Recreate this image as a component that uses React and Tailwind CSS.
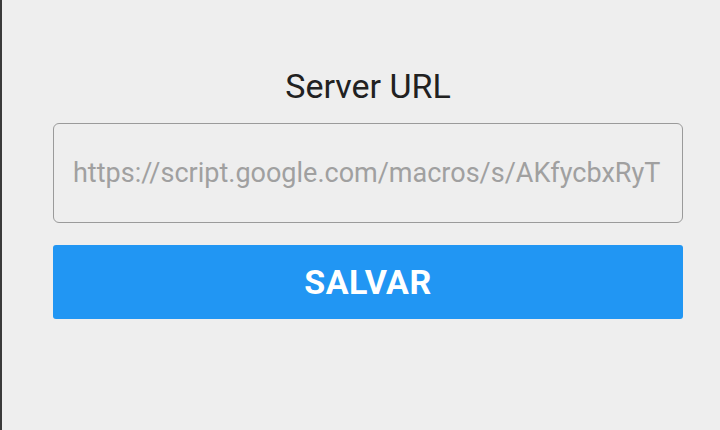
export default function App() {
  return (
    <div className="w-[720px] h-[430px] bg-[#eeeeee] border-l-2 border-[#3a3a3a] flex flex-col pl-[51px] pr-[37px] pt-[66px] overflow-hidden font-['Roboto','Noto_Sans',sans-serif]">
      <div className="text-center text-[34px] leading-[40px] text-[#212121]">Server URL</div>
      <div className="mt-[17px] h-[100px] border-[1.5px] border-[#9a9a9a] rounded-[6px] flex items-center px-[19px]">
        <input
          className="w-full bg-transparent outline-none text-[27px] text-[#212121] placeholder:text-[#a0a0a0]"
          placeholder="https://script.google.com/macros/s/AKfycbxRyT"
        />
      </div>
      <button className="mt-[22px] h-[74px] bg-[#2196f3] rounded-[3px] text-white font-bold text-[34px] tracking-[0.5px] flex items-center justify-center">
        SALVAR
      </button>
    </div>
  );
}
